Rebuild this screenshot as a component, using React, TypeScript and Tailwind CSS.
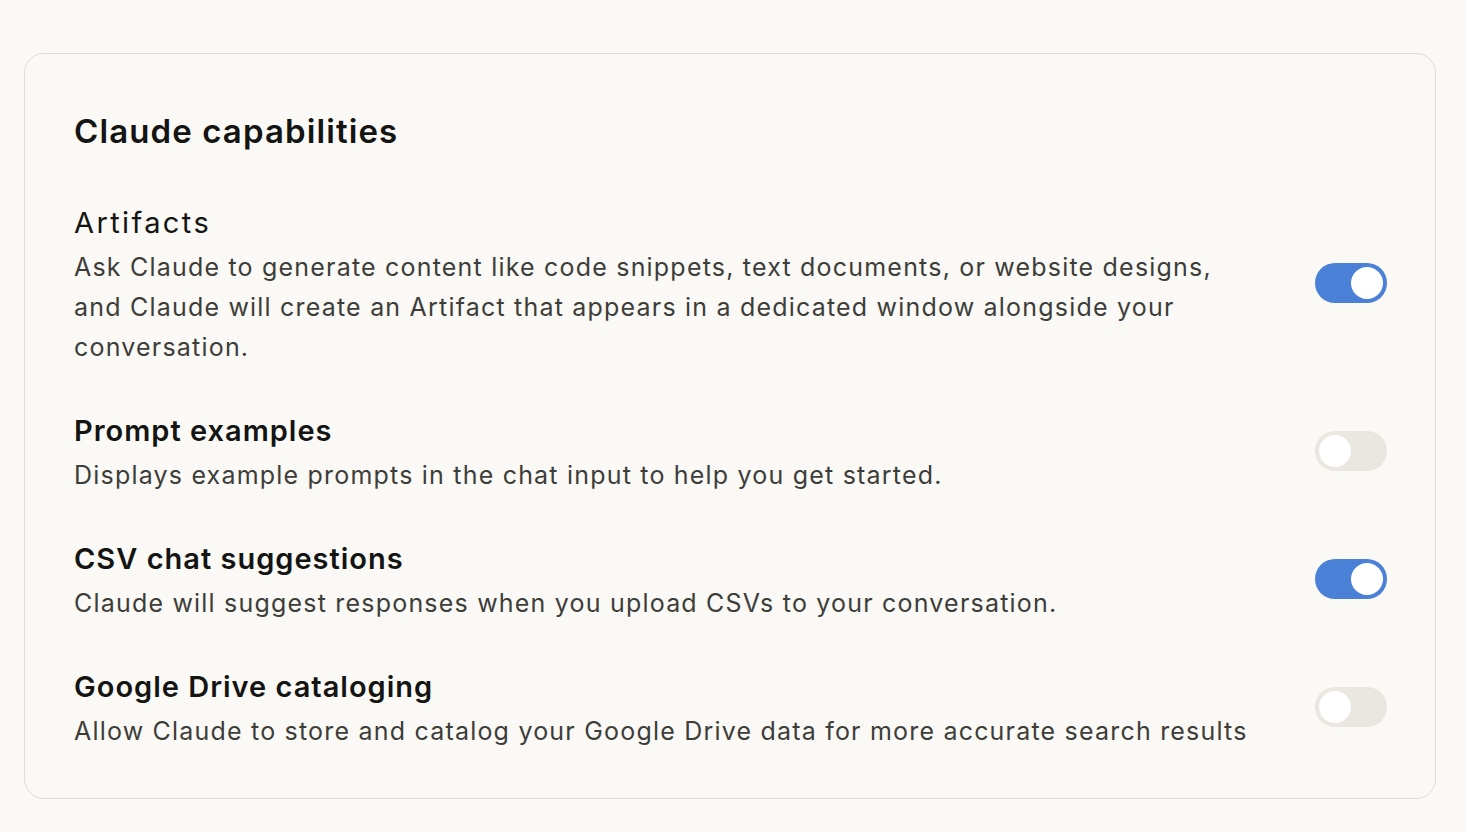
import React, { useState } from 'react';

type Capability = {
    id: string;
    title: string;
    description: string;
    enabled: boolean;
    bold: boolean;
};

const initialCapabilities: Capability[] = [
    {
        id: 'artifacts',
        title: 'Artifacts',
        description:
            'Ask Claude to generate content like code snippets, text documents, or website designs, and Claude will create an Artifact that appears in a dedicated window alongside your conversation.',
        enabled: true,
        bold: false,
    },
    {
        id: 'prompts',
        title: 'Prompt examples',
        description: 'Displays example prompts in the chat input to help you get started.',
        enabled: false,
        bold: true,
    },
    {
        id: 'csv',
        title: 'CSV chat suggestions',
        description: 'Claude will suggest responses when you upload CSVs to your conversation.',
        enabled: true,
        bold: true,
    },
    {
        id: 'drive',
        title: 'Google Drive cataloging',
        description: 'Allow Claude to store and catalog your Google Drive data for more accurate search results',
        enabled: false,
        bold: true,
    },
];

const Toggle: React.FC<{ on: boolean; onClick: () => void }> = ({ on, onClick }) => (
    <button
        type="button"
        onClick={onClick}
        className={`flex h-[40px] w-[72px] shrink-0 items-center rounded-full px-[4px] ${on ? 'bg-[#4a80d6] justify-end' : 'bg-[#e9e7e0] justify-start'}`}
    >
        <span className="block h-[32px] w-[32px] rounded-full bg-white" />
    </button>
);

const App: React.FC = () => {
    const [caps, setCaps] = useState(initialCapabilities);

    const toggle = (id: string) => {
        setCaps(caps.map(c => (c.id === id ? { ...c, enabled: !c.enabled } : c)));
    };

    return (
        <div
            className="min-h-screen bg-[#faf9f5] pl-[24px] pr-[30px] pt-[53px]"
            style={{ fontFamily: 'Inter, "Noto Sans", sans-serif' }}
        >
            <div className="rounded-[20px] border border-[#dedcd5] pl-[49px] pr-[48px] pt-[57px] pb-[47px]">
                <h2 className="text-[33px] font-semibold leading-[40px] tracking-[1.1px] text-[#141413]">
                    Claude capabilities
                </h2>
                <div className="mt-[48px] flex flex-col gap-[40px]">
                    {caps.map(c => (
                        <div key={c.id} className="flex items-center justify-between gap-[60px]">
                            <div className="max-w-[1182px]">
                                <div
                                    className={`text-[29px] leading-[48px] text-[#141413] ${c.bold ? 'font-semibold tracking-[1px]' : 'font-normal tracking-[2.4px]'}`}
                                >
                                    {c.title}
                                </div>
                                <p className="text-[25px] leading-[40px] tracking-[1.2px] text-[#3d3d3a]">
                                    {c.description}
                                </p>
                            </div>
                            <Toggle on={c.enabled} onClick={() => toggle(c.id)} />
                        </div>
                    ))}
                </div>
            </div>
        </div>
    );
};

export default App;
